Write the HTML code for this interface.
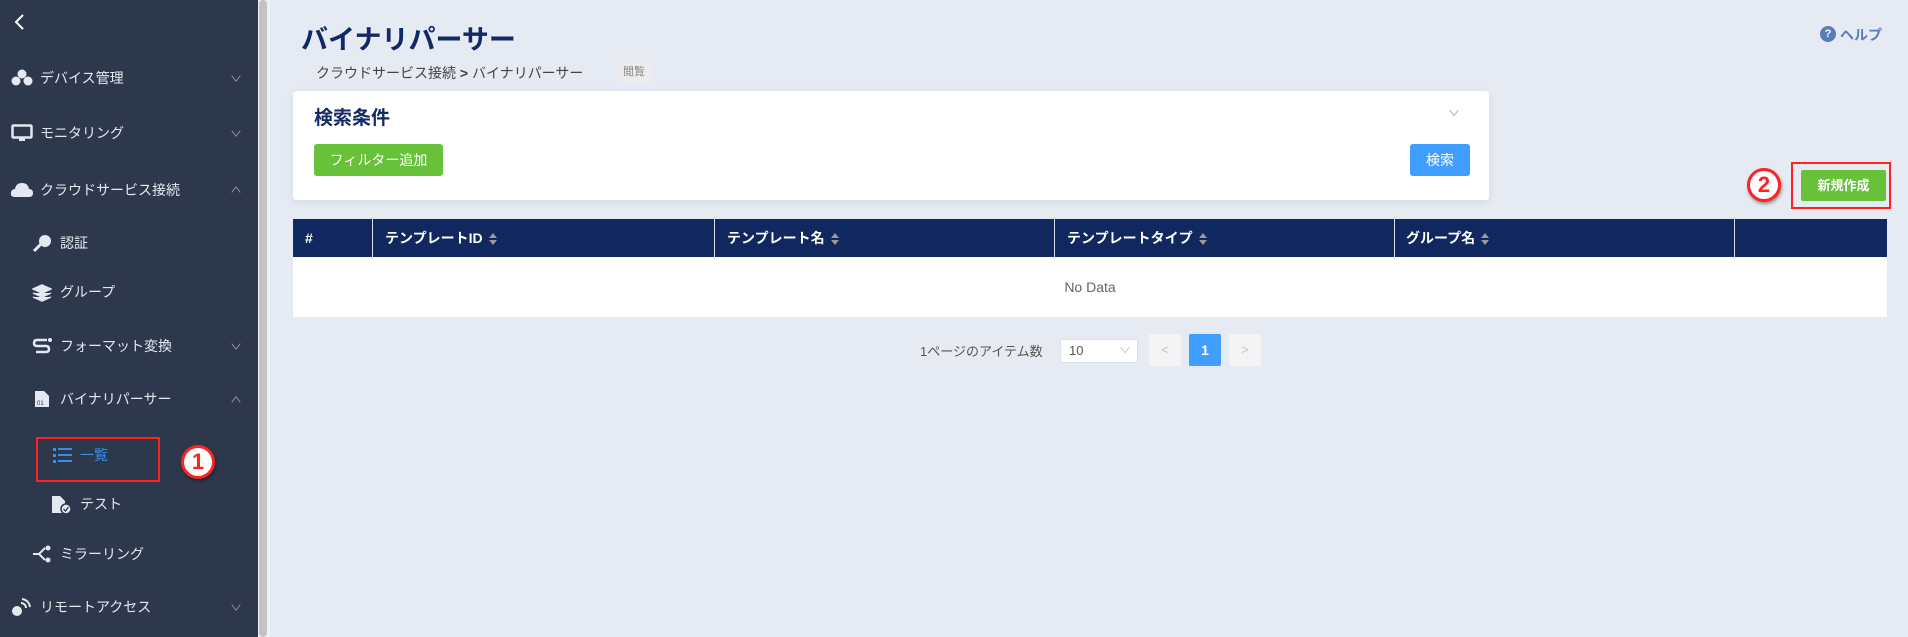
<!DOCTYPE html>
<html><head><meta charset="utf-8"><style>
*{margin:0;padding:0;box-sizing:border-box}
body{width:1908px;height:637px;overflow:hidden;background:#e6eaf3;font-family:"Liberation Sans","Noto Sans CJK JP",sans-serif;position:relative}
.a{position:absolute}
.sb{left:0;top:0;width:258px;height:637px;background:#2e384d}
.scr{left:259px;top:0;width:8px;height:637px;background:#c3c3c3;border-radius:4px}
.scrbg{left:258px;top:0;width:12px;height:637px;background:#eef0f5}
.it{color:#e4e8f0;font-size:14px;white-space:nowrap;transform:translateY(-50%)}
.chev{color:#aab;font-size:8px;transform:translateY(-50%) scaleX(1.5)}
.ic{background:#e4e8f0;transform:translateY(-50%)}
.circ{width:34px;height:34px;border-radius:50%;background:#fff;border:3px solid #f22;color:#f22;font-weight:bold;font-size:22px;text-align:center;line-height:28px;box-shadow:1px 2px 3px rgba(0,0,0,.4)}
.th{color:#fff;font-weight:bold;font-size:14px;top:219px;height:38px;line-height:38px}
.div{top:219px;width:1px;height:38px;background:#d8dde8}
.sort{display:inline-block;vertical-align:middle;margin-left:6px;width:8px;height:12px;position:relative}
.sort:before{content:"";position:absolute;left:0;top:0;border:4px solid transparent;border-bottom:5px solid #999;border-top:0}
.sort:after{content:"";position:absolute;left:0;bottom:0;border:4px solid transparent;border-top:5px solid #999;border-bottom:0}
</style></head><body>
<div class="a sb"></div>
<div class="a scrbg"></div>
<div class="a scr"></div>
<svg class="a" style="left:12px;top:13px" width="14" height="18"><path d="M11 2 L4 9 L11 16" stroke="#fff" stroke-width="2" fill="none"/></svg>

<svg class="a" style="left:11px;top:69px" width="22" height="18"><circle cx="11" cy="5" r="4.5" fill="#e4e8f0"/><circle cx="5" cy="12" r="4.5" fill="#e4e8f0"/><circle cx="17" cy="12" r="4.5" fill="#e4e8f0"/></svg>
<div class="a it" style="left:40px;top:78px">デバイス管理</div><div class="a chev" style="left:232px;top:79px">∨</div>
<svg class="a" style="left:11px;top:124px" width="22" height="18"><rect x="1.5" y="1.5" width="19" height="12" rx="1" stroke="#e4e8f0" stroke-width="2.5" fill="none"/><rect x="8" y="14" width="6" height="3" fill="#e4e8f0"/></svg>
<div class="a it" style="left:40px;top:133px">モニタリング</div><div class="a chev" style="left:232px;top:134px">∨</div>
<svg class="a" style="left:10px;top:180px" width="24" height="18"><path d="M5 17 Q0 17 1 12 Q2 9 5 9 Q6 3 12 3 Q18 3 19 9 Q23 9 23 13 Q23 17 19 17Z" fill="#e4e8f0"/></svg>
<div class="a it" style="left:40px;top:190px">クラウドサービス接続</div><div class="a chev" style="left:232px;top:190px">∧</div>
<svg class="a" style="left:32px;top:234px" width="20" height="18"><circle cx="13" cy="7" r="6" fill="#e4e8f0"/><path d="M9 10 L2 17" stroke="#e4e8f0" stroke-width="3"/></svg>
<div class="a it" style="left:60px;top:243px">認証</div>
<svg class="a" style="left:32px;top:284px" width="20" height="18"><path d="M10 1 L19 5 L10 9 L1 5Z M1 9 L10 13 L19 9 M1 13 L10 17 L19 13" fill="#e4e8f0" stroke="#e4e8f0" stroke-width="1.5"/></svg>
<div class="a it" style="left:60px;top:292px">グループ</div>
<svg class="a" style="left:32px;top:337px" width="20" height="18"><path d="M15 3 H5 Q2 3 2 6 Q2 9 5 9 H14 Q17 9 17 12 Q17 15 14 15 H4" stroke="#e4e8f0" stroke-width="2.5" fill="none"/><circle cx="18" cy="3" r="2" fill="#e4e8f0"/></svg>
<div class="a it" style="left:60px;top:346px">フォーマット変換</div><div class="a chev" style="left:232px;top:347px">∨</div>
<svg class="a" style="left:34px;top:390px" width="16" height="18"><path d="M1 1 H10 L15 6 V17 H1Z" fill="#e4e8f0"/><text x="3" y="15" font-size="6" fill="#2e384d">01</text></svg>
<div class="a it" style="left:60px;top:399px">バイナリパーサー</div><div class="a chev" style="left:232px;top:400px">∧</div>
<svg class="a" style="left:53px;top:447px" width="20" height="16"><g fill="#3a8ee6"><rect x="0" y="1" width="3" height="3"/><rect x="0" y="7" width="3" height="3"/><rect x="0" y="13" width="3" height="3"/><rect x="5" y="1" width="14" height="2"/><rect x="5" y="7" width="14" height="2"/><rect x="5" y="13" width="14" height="2"/></g></svg>
<div class="a it" style="left:80px;top:455px;color:#3a8ee6">一覧</div>
<div class="a" style="left:36px;top:437px;width:124px;height:45px;border:2px solid #f22"></div>
<div class="a circ" style="left:181px;top:445px">1</div>
<svg class="a" style="left:51px;top:495px" width="22" height="20"><path d="M1 1 H9 L14 6 V18 H1Z" fill="#e4e8f0"/><circle cx="15" cy="14" r="5" fill="#e4e8f0" stroke="#2e384d" stroke-width="1.5"/><path d="M12.5 14 L14.5 16 L17.5 12" stroke="#2e384d" stroke-width="1.3" fill="none"/></svg>
<div class="a it" style="left:80px;top:504px">テスト</div>
<svg class="a" style="left:32px;top:545px" width="20" height="18"><path d="M1 9 H7 L13 3 M7 9 L13 15" stroke="#e4e8f0" stroke-width="2" fill="none"/><circle cx="16" cy="3" r="2.5" fill="#e4e8f0"/><circle cx="16" cy="15" r="2.5" fill="#e4e8f0"/></svg>
<div class="a it" style="left:60px;top:554px">ミラーリング</div>
<svg class="a" style="left:11px;top:597px" width="22" height="20"><circle cx="6" cy="14" r="5" fill="#e4e8f0"/><path d="M10 6 A5 5 0 0 1 15 11 M11 2 A9 9 0 0 1 19 10" stroke="#e4e8f0" stroke-width="2" fill="none"/></svg>
<div class="a it" style="left:40px;top:607px">リモートアクセス</div><div class="a chev" style="left:232px;top:608px">∨</div>

<div class="a" style="left:301px;top:18px;font-size:27px;font-weight:bold;color:#112a66">バイナリパーサー</div>
<div class="a" style="left:316px;top:63px;font-size:14px;color:#444">クラウドサービス接続 <span style="font-weight:bold">&gt;</span> バイナリパーサー</div>
<div class="a" style="left:617px;top:62px;width:34px;height:20px;background:#ececec;border-radius:3px;font-size:11px;color:#888;text-align:center;line-height:20px">閲覧</div>
<div class="a" style="left:1820px;top:26px;width:16px;height:16px;border-radius:50%;background:#5b7cba;color:#fff;font-size:11px;font-weight:bold;text-align:center;line-height:16px">?</div>
<div class="a" style="left:1840px;top:25px;font-size:14px;font-weight:bold;color:#5b7cba">ヘルプ</div>

<div class="a" style="left:293px;top:91px;width:1196px;height:109px;background:#fff;border-radius:3px;box-shadow:0 2px 8px rgba(0,0,0,.08)"></div>
<div class="a" style="left:314px;top:103px;font-size:19px;font-weight:bold;color:#112a66">検索条件</div>
<div class="a" style="left:1450px;top:108px;font-size:8px;color:#999;transform:scaleX(1.5)">∨</div>
<div class="a" style="left:314px;top:144px;width:129px;height:32px;background:#67c23a;border-radius:3px;color:#fff;font-size:14px;text-align:center;line-height:32px">フィルター追加</div>
<div class="a" style="left:1410px;top:144px;width:60px;height:32px;background:#409eff;border-radius:3px;color:#fff;font-size:14px;text-align:center;line-height:32px">検索</div>

<div class="a circ" style="left:1747px;top:168px">2</div>
<div class="a" style="left:1791px;top:162px;width:100px;height:47px;border:2px solid #f22"></div>
<div class="a" style="left:1801px;top:170px;width:85px;height:31px;background:#67c23a;border-radius:2px;color:#fff;font-size:13px;font-weight:bold;text-align:center;line-height:31px">新規作成</div>

<div class="a" style="left:293px;top:219px;width:1594px;height:38px;background:#10285f"></div>
<div class="a" style="left:293px;top:257px;width:1594px;height:60px;background:#fff"></div>
<div class="a div" style="left:372px"></div><div class="a div" style="left:714px"></div><div class="a div" style="left:1054px"></div><div class="a div" style="left:1394px"></div><div class="a div" style="left:1734px"></div>
<div class="a th" style="left:305px">#</div>
<div class="a th" style="left:385px">テンプレートID<span class="sort"></span></div>
<div class="a th" style="left:727px">テンプレート名<span class="sort"></span></div>
<div class="a th" style="left:1067px">テンプレートタイプ<span class="sort"></span></div>
<div class="a th" style="left:1406px">グループ名<span class="sort"></span></div>
<div class="a" style="left:293px;top:279px;width:1594px;text-align:center;font-size:14px;color:#666">No Data</div>

<div class="a" style="left:920px;top:341px;font-size:13px;color:#555">1ページのアイテム数</div>
<div class="a" style="left:1060px;top:339px;width:78px;height:24px;background:#fff;border:1px solid #dcdfe6;border-radius:3px;font-size:13px;color:#555;padding-left:8px;line-height:22px">10<span style="position:absolute;right:8px;color:#bbb;font-size:8px;transform:scaleX(1.5)">∨</span></div>
<div class="a" style="left:1149px;top:334px;width:32px;height:32px;background:#f4f4f5;border-radius:2px;color:#c0c4cc;text-align:center;line-height:32px;font-size:13px">&lt;</div>
<div class="a" style="left:1189px;top:334px;width:32px;height:32px;background:#409eff;border-radius:2px;color:#fff;text-align:center;line-height:32px;font-size:14px;font-weight:bold">1</div>
<div class="a" style="left:1229px;top:334px;width:32px;height:32px;background:#f4f4f5;border-radius:2px;color:#c0c4cc;text-align:center;line-height:32px;font-size:13px">&gt;</div>
</body></html>
